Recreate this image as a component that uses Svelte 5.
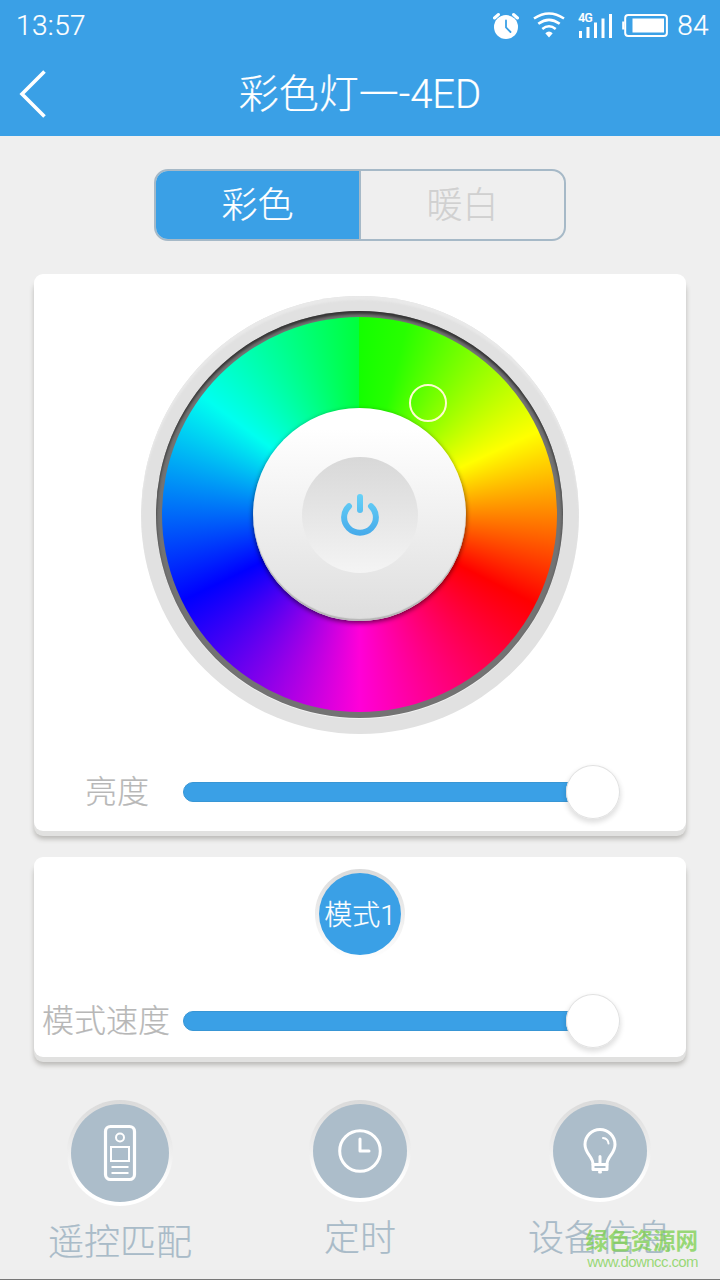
<script lang="ts">
  let mode = $state('color');
  let brightness = $state(100);
  let speed = $state(100);

  const tabs = [
    { id: 'color', label: '彩色' },
    { id: 'warm', label: '暖白' }
  ];
</script>

{#snippet slider(label: string, value: number)}
  <div class="slider-row">
    <span class="slider-label">{label}</span>
    <div class="slider">
      <div class="fill" style="width: {value}%"></div>
      <div class="thumb"></div>
    </div>
  </div>
{/snippet}

<div class="screen">
  <header>
    <div class="status-bar">
      <span>13:57</span>
      <div class="status-icons">
        <svg class="alarm" width="26" height="28" viewBox="0 0 26 28">
          <circle cx="13" cy="15" r="12" fill="#fff" />
          <path d="M1.5 6 L5.5 2.5 M24.5 6 L20.5 2.5" stroke="#fff" stroke-width="3" stroke-linecap="round" />
          <path d="M13 8.5 V15.5 L17.5 20" fill="none" stroke="#3aa0e6" stroke-width="1.8" stroke-linecap="round" />
        </svg>
        <svg class="wifi" width="32" height="26" viewBox="0 0 32 26" fill="none" stroke="#fff" stroke-width="2.6">
          <path d="M1 6.5 Q16 -3.5 31 6.5" />
          <path d="M5.3 11.8 Q16 3.8 26.7 11.8" />
          <path d="M9.3 17 Q16 11.5 22.7 17" />
          <path d="M12.3 21.3 Q16 17.8 19.7 21.3 L16 25.5 Z" fill="#fff" stroke="none" />
        </svg>
        <div class="signal">
          <span>4G</span>
          <svg width="34" height="26" viewBox="0 0 34 26" fill="#fff">
            <rect x="1" y="18" width="3" height="7" />
            <rect x="8.5" y="14" width="3" height="11" />
            <rect x="16" y="9.5" width="3" height="15.5" />
            <rect x="23.5" y="5.5" width="3" height="19.5" />
            <rect x="31" y="1" width="3" height="24" />
          </svg>
        </div>
        <svg class="battery" width="46" height="23" viewBox="0 0 46 23">
          <rect x="3.2" y="1.1" width="41.7" height="20.8" rx="3" fill="none" stroke="#fff" stroke-width="2" />
          <rect x="10.5" y="4.5" width="31.5" height="14" fill="#fff" />
          <path d="M2.5 8.5 H1.2 V14.5 H2.5" fill="none" stroke="#fff" stroke-width="2" />
        </svg>
        <span>84</span>
      </div>
    </div>
    <div class="title-bar">
      <button class="back" aria-label="返回">
        <svg width="28" height="48" viewBox="0 0 28 48" fill="none" stroke="#fff" stroke-width="3.6">
          <path d="M25.5 1.5 L3 24 L25.5 46.5" />
        </svg>
      </button>
      <h1>彩色灯一-4ED</h1>
    </div>
  </header>

  <main>
    <div class="tabs">
      {#each tabs as tab}
        <button class="tab" class:active={mode === tab.id} onclick={() => (mode = tab.id)}>{tab.label}</button>
      {/each}
    </div>

    <section class="card color-card">
      <div class="dial">
        <div class="groove">
          <div class="wheel">
            <div class="knob">
              <button class="power" aria-label="开关">
                <svg width="40" height="44" viewBox="0 0 40 44" fill="none" stroke="url(#power)" stroke-width="6" stroke-linecap="round">
                  <defs>
                    <linearGradient id="power" gradientUnits="userSpaceOnUse" x1="0" y1="0" x2="0" y2="44">
                      <stop offset="0" stop-color="#68d2f7" />
                      <stop offset="1" stop-color="#45a9ea" />
                    </linearGradient>
                  </defs>
                  <path d="M20 4 V17" />
                  <path d="M9 13.2 A15.9 15.4 0 1 0 31 13.2" />
                </svg>
              </button>
            </div>
          </div>
        </div>
        <div class="picker"></div>
      </div>
      {@render slider('亮度', brightness)}
    </section>

    <section class="card mode-card">
      <button class="mode-button">模式1</button>
      {@render slider('模式速度', speed)}
    </section>
  </main>

  <nav>
    <div class="tool">
      <div class="tool-icon large">
        <svg width="34" height="58" viewBox="0 0 34 58" fill="none" stroke="#fff">
          <rect x="2.5" y="2.5" width="29" height="53" rx="5" stroke-width="3.2" />
          <circle cx="17" cy="13.5" r="4" stroke-width="2" />
          <rect x="8" y="23" width="18" height="14" stroke-width="2" />
          <path d="M8.5 43 H25.5 M8.5 49 H25.5" stroke-width="2.2" />
        </svg>
      </div>
      <span>遥控匹配</span>
    </div>
    <div class="tool">
      <div class="tool-icon">
        <svg width="46" height="46" viewBox="0 0 46 46" fill="none" stroke="#fff" stroke-width="3">
          <circle cx="23" cy="23" r="20.3" />
          <path d="M23 11 V23 H32" stroke-linecap="round" stroke-linejoin="round" />
        </svg>
      </div>
      <span>定时</span>
    </div>
    <div class="tool">
      <div class="tool-icon">
        <svg width="36" height="48" viewBox="0 0 36 48" fill="none" stroke="#fff" stroke-width="3" stroke-linejoin="round" stroke-linecap="round">
          <path d="M11 37.5 C11 29 3 27 3 17.5 A15 15 0 0 1 33 17.5 C33 27 25 29 25 37.5 Z" />
          <path d="M11 37.5 V42.5 H25 V37.5 M18 29.5 V36 M17.5 45 H18.5" />
          <path d="M21 11 Q26 11.5 26.5 16.5" stroke-width="2" />
        </svg>
      </div>
      <span>设备信息</span>
    </div>
  </nav>

  <div class="watermark">
    <strong>绿色资源网</strong>
    <span>www.downcc.com</span>
  </div>
</div>

<style>
  :global(body) {
    margin: 0;
  }

  .screen {
    position: relative;
    display: flex;
    flex-direction: column;
    width: 720px;
    height: 1280px;
    box-sizing: border-box;
    overflow: hidden;
    background: #efefef;
    border-bottom: 1px solid #777;
    font-family: Roboto, 'Noto Sans CJK SC', sans-serif;
    font-weight: 300;
    -webkit-text-stroke: 0.2px;
  }

  button {
    border: none;
    padding: 0;
    background: none;
    font: inherit;
  }

  svg {
    display: block;
    flex-shrink: 0;
  }

  header {
    height: 136px;
    background: #3aa0e6;
    color: #fff;
  }

  .status-bar {
    display: flex;
    justify-content: space-between;
    align-items: center;
    height: 51px;
    padding: 0 11px 0 16px;
    font-size: 28px;
    line-height: 51px;
    letter-spacing: 0.4px;
  }

  .status-icons {
    display: flex;
    align-items: center;
  }

  .wifi {
    margin: 0 13px 2px 14px;
  }

  .signal {
    position: relative;
    margin-right: 10px;
  }

  .signal span {
    position: absolute;
    top: 0;
    left: 0;
    font: 500 12px/10px Roboto, sans-serif;
    letter-spacing: -0.5px;
  }

  .battery {
    margin-right: 9px;
  }

  .title-bar {
    display: grid;
    grid-template-columns: 60px 1fr 60px;
    align-items: center;
    height: 84px;
  }

  .back {
    padding-left: 19px;
  }

  h1 {
    margin: 0;
    text-align: center;
    font-size: 40px;
    font-weight: 300;
    line-height: 84px;
    padding-top: 2px;
  }

  main {
    display: flex;
    flex-direction: column;
    align-items: center;
    padding-top: 33px;
  }

  .tabs {
    display: flex;
    width: 412px;
    height: 72px;
    box-sizing: border-box;
    border: 2px solid #a6b9c7;
    border-radius: 14px;
    overflow: hidden;
    margin-bottom: 33px;
  }

  .tab {
    flex: 1;
    color: #d0d0d0;
    font-size: 36px;
    line-height: 65px;
    padding-top: 3px;
  }

  .tab + .tab {
    border-left: 2px solid #a6b9c7;
  }

  .tab.active {
    background: #3aa0e6;
    color: #fff;
  }

  .card {
    display: flex;
    flex-direction: column;
    align-items: center;
    width: 652px;
    box-sizing: border-box;
    border-radius: 9px;
    background: #fff;
    box-shadow: 0 5px 0 #e1e1e0, 0 8px 5px #b9b8b5;
  }

  .color-card {
    height: 557px;
    padding-top: 22px;
    margin-bottom: 26px;
  }

  .mode-card {
    height: 200px;
    padding-top: 12px;
  }

  .dial {
    position: relative;
    width: 438px;
    height: 438px;
    box-sizing: border-box;
    padding: 15px;
    border-radius: 50%;
    background: #e1e1e1;
    box-shadow: inset 0 4px 2px #e9e9e9;
    margin-bottom: 31px;
  }

  .groove {
    display: grid;
    place-items: center;
    width: 407px;
    height: 407px;
    border-radius: 50%;
    background: #737373;
    box-shadow: inset 0 3px 3px #333, 0 1px 0 #f2f2f2;
  }

  .wheel {
    display: grid;
    place-items: center;
    width: 395px;
    height: 395px;
    border-radius: 50%;
    background: conic-gradient(
      #14ff00 0deg,
      #28ff00 14deg,
      #ff0 65deg,
      #f00 117deg,
      #ff00d8 180deg,
      #00f 244deg,
      #00fff0 307deg,
      #00ff3c 360deg
    );
  }

  .knob {
    display: grid;
    place-items: center;
    width: 213px;
    height: 213px;
    border-radius: 50%;
    background: linear-gradient(#fff 10%, #dedede);
    box-shadow: inset 0 -2px 1px #b5b5b5, 0 2px 5px rgba(0, 0, 0, 0.6);
  }

  .power {
    display: grid;
    place-items: center;
    width: 116px;
    height: 116px;
    border-radius: 50%;
    background: linear-gradient(#d8d8d8, #f4f4f4);
  }

  .picker {
    position: absolute;
    left: 268px;
    top: 88px;
    width: 34px;
    height: 34px;
    border: 2px solid #fffbd0;
    border-radius: 50%;
  }

  .slider-row {
    display: grid;
    grid-template-columns: 141px 437px;
    align-items: center;
    width: 100%;
    box-sizing: border-box;
    padding-left: 8px;
    height: 54px;
  }

  .slider-label {
    color: #b7b7b7;
    font-size: 32px;
    line-height: 54px;
    text-align: center;
    padding-right: 15px;
    white-space: nowrap;
  }

  .color-card .slider-label {
    padding-right: 0;
    padding-left: 9px;
  }

  .slider {
    display: flex;
    align-items: center;
  }

  .fill {
    height: 20px;
    border-radius: 10px;
    box-sizing: border-box;
    border: 1px solid #3896d5;
    background: #3aa0e6;
  }

  .thumb {
    flex-shrink: 0;
    width: 54px;
    height: 54px;
    margin-left: -54px;
    border-radius: 50%;
    background: #fff;
    box-shadow: inset 0 0 0 1px #e1e1e1, 0 3px 5px 1px rgba(0, 0, 0, 0.12);
  }

  .mode-button {
    width: 90px;
    height: 90px;
    box-sizing: border-box;
    border: 4px solid transparent;
    border-radius: 50%;
    background: linear-gradient(#3aa0e6, #3aa0e6) padding-box, linear-gradient(#dadada, #fff) border-box;
    color: #fff;
    font-size: 28px;
    line-height: 78px;
    padding-top: 4px;
    white-space: nowrap;
    margin-bottom: 35px;
  }

  nav {
    display: grid;
    grid-template-columns: repeat(3, 240px);
    padding-top: 43px;
  }

  .tool {
    display: flex;
    flex-direction: column;
    align-items: center;
    color: #a9bbc8;
    font-size: 36px;
    line-height: 54px;
  }

  .tool-icon {
    display: grid;
    place-items: center;
    box-sizing: border-box;
    width: 102px;
    height: 102px;
    border: 4px solid transparent;
    border-radius: 50%;
    background: linear-gradient(#acbdca, #acbdca) padding-box, linear-gradient(#dadada, #efefef 50%, #fff 80%) border-box;
    margin-bottom: 10px;
  }

  .tool-icon.large {
    width: 106px;
    height: 106px;
    margin-left: -1px;
  }

  .watermark {
    position: absolute;
    right: 22px;
    bottom: 9px;
    display: flex;
    flex-direction: column;
    align-items: flex-end;
    color: rgba(124, 207, 78, 0.75);
    -webkit-text-stroke: 0;
  }

  .watermark strong {
    font-size: 22.5px;
    font-weight: 700;
    line-height: 26px;
  }

  .watermark span {
    font: 400 15px/16px 'Liberation Sans', sans-serif;
    letter-spacing: -0.6px;
  }
</style>
